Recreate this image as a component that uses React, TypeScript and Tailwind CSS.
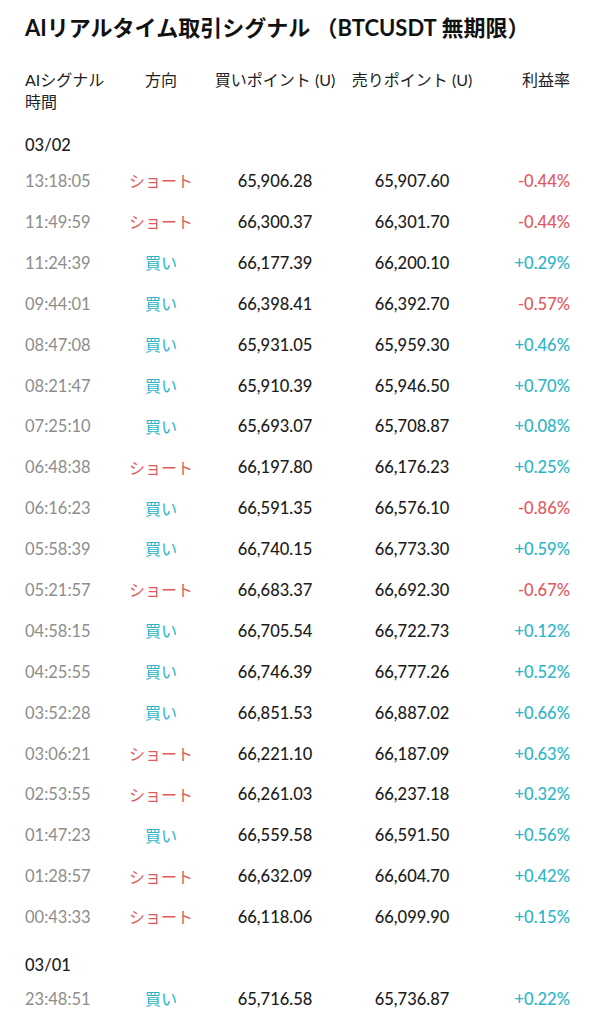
type Row = { t: string; dir: "short" | "buy"; buy: string; sell: string; pct: string };

const day1: Row[] = [
  { t: "13:18:05", dir: "short", buy: "65,906.28", sell: "65,907.60", pct: "-0.44%" },
  { t: "11:49:59", dir: "short", buy: "66,300.37", sell: "66,301.70", pct: "-0.44%" },
  { t: "11:24:39", dir: "buy", buy: "66,177.39", sell: "66,200.10", pct: "+0.29%" },
  { t: "09:44:01", dir: "buy", buy: "66,398.41", sell: "66,392.70", pct: "-0.57%" },
  { t: "08:47:08", dir: "buy", buy: "65,931.05", sell: "65,959.30", pct: "+0.46%" },
  { t: "08:21:47", dir: "buy", buy: "65,910.39", sell: "65,946.50", pct: "+0.70%" },
  { t: "07:25:10", dir: "buy", buy: "65,693.07", sell: "65,708.87", pct: "+0.08%" },
  { t: "06:48:38", dir: "short", buy: "66,197.80", sell: "66,176.23", pct: "+0.25%" },
  { t: "06:16:23", dir: "buy", buy: "66,591.35", sell: "66,576.10", pct: "-0.86%" },
  { t: "05:58:39", dir: "buy", buy: "66,740.15", sell: "66,773.30", pct: "+0.59%" },
  { t: "05:21:57", dir: "short", buy: "66,683.37", sell: "66,692.30", pct: "-0.67%" },
  { t: "04:58:15", dir: "buy", buy: "66,705.54", sell: "66,722.73", pct: "+0.12%" },
  { t: "04:25:55", dir: "buy", buy: "66,746.39", sell: "66,777.26", pct: "+0.52%" },
  { t: "03:52:28", dir: "buy", buy: "66,851.53", sell: "66,887.02", pct: "+0.66%" },
  { t: "03:06:21", dir: "short", buy: "66,221.10", sell: "66,187.09", pct: "+0.63%" },
  { t: "02:53:55", dir: "short", buy: "66,261.03", sell: "66,237.18", pct: "+0.32%" },
  { t: "01:47:23", dir: "buy", buy: "66,559.58", sell: "66,591.50", pct: "+0.56%" },
  { t: "01:28:57", dir: "short", buy: "66,632.09", sell: "66,604.70", pct: "+0.42%" },
  { t: "00:43:33", dir: "short", buy: "66,118.06", sell: "66,099.90", pct: "+0.15%" },
];

const day2: Row[] = [
  { t: "23:48:51", dir: "buy", buy: "65,716.58", sell: "65,736.87", pct: "+0.22%" },
];

const cols = "grid grid-cols-[95px_82px_146px_128px_1fr] items-center";

function SignalRow({ r }: { r: Row }) {
  return (
    <div className={`${cols} h-[40.9px] text-[16.5px]`}>
      <span className="text-[#8d8d8d]">{r.t}</span>
      <span className={`text-center text-[16px] ${r.dir === "short" ? "text-[#df5a5e]" : "text-[#2bb5c7]"}`}>
        {r.dir === "short" ? "ショート" : "買い"}
      </span>
      <span className="text-center text-[#1c1c1c] font-medium">{r.buy}</span>
      <span className="text-center text-[#1c1c1c] font-medium">{r.sell}</span>
      <span className={`text-right font-medium ${r.pct.startsWith("-") ? "text-[#df5a5e]" : "text-[#2bb5c7]"}`}>
        {r.pct}
      </span>
    </div>
  );
}

export default function App() {
  return (
    <div
      className="w-[595px] min-h-[1024px] bg-white px-[25px] pt-[14px] text-[#1c1c1c]"
      style={{ fontFamily: '"Lato", "Noto Sans CJK JP", sans-serif' }}
    >
      <h1 className="text-[22px] leading-[28px] font-bold text-[#111]">
        AIリアルタイム取引シグナル （BTCUSDT 無期限）
      </h1>

      {/* table header */}
      <div className={`${cols} items-start mt-[27px] text-[16px] leading-[22px] text-[#222]`}>
        <span>
          AIシグナル
          <br />
          時間
        </span>
        <span className="text-center">方向</span>
        <span className="text-center">買いポイント (U)</span>
        <span className="text-center">売りポイント (U)</span>
        <span className="text-right">利益率</span>
      </div>

      <div className="mt-[21px] text-[16.5px] leading-[22px] font-medium">03/02</div>
      <div className="mt-[5px]">
        {day1.map((r) => (
          <SignalRow key={r.t} r={r} />
        ))}
      </div>

      <div className="mt-[16px] text-[16.5px] leading-[22px] font-medium">03/01</div>
      <div className="mt-[3px]">
        {day2.map((r) => (
          <SignalRow key={r.t} r={r} />
        ))}
      </div>
    </div>
  );
}
